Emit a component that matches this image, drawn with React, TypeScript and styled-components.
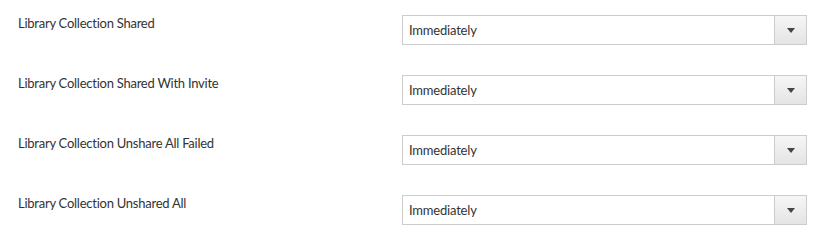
import React, { useState } from "react";
import styled, { createGlobalStyle } from "styled-components";

const GlobalStyle = createGlobalStyle`
  html, body {
    margin: 0;
    padding: 0;
    background: #fff;
  }
  body {
    font-family: Lato, "Open Sans", sans-serif;
    color: #333;
  }
`;

const Page = styled.div`
  width: 823px;
  padding: 15px 0 0 18px;
  box-sizing: border-box;
  display: flex;
  flex-direction: column;
  gap: 30px;
`;

const Row = styled.div`
  display: flex;
  align-items: flex-start;
  height: 30px;
`;

const Label = styled.div`
  width: 384px;
  font-size: 13px;
  line-height: 16px;
  letter-spacing: -0.25px;
  color: #333;
`;

const SelectBox = styled.div`
  display: flex;
  width: 405px;
  height: 30px;
  box-sizing: border-box;
  border: 1px solid #ccc;
  background: #fff;
  cursor: pointer;
`;

const Value = styled.div`
  flex: 1;
  padding-left: 6px;
  font-size: 13px;
  line-height: 28px;
  letter-spacing: -0.2px;
  color: #333;
`;

const ArrowButton = styled.div`
  width: 31px;
  height: 28px;
  border-left: 1px solid #ccc;
  background: linear-gradient(#f6f6f6, #e4e4e4);
  display: flex;
  align-items: center;
  justify-content: center;
`;

const Triangle = styled.span`
  width: 0;
  height: 0;
  border-left: 4px solid transparent;
  border-right: 4px solid transparent;
  border-top: 5px solid #444;
  margin-top: 1px;
`;

const rows = [
  "Library Collection Shared",
  "Library Collection Shared With Invite",
  "Library Collection Unshare All Failed",
  "Library Collection Unshared All",
];

const App = () => {
  const [values] = useState(rows.map(() => "Immediately"));
  return (
    <>
      <GlobalStyle />
      <Page>
        {rows.map((name, i) => (
          <Row key={name}>
            <Label>{name}</Label>
            <SelectBox>
              <Value>{values[i]}</Value>
              <ArrowButton>
                <Triangle />
              </ArrowButton>
            </SelectBox>
          </Row>
        ))}
      </Page>
    </>
  );
};

export default App;
